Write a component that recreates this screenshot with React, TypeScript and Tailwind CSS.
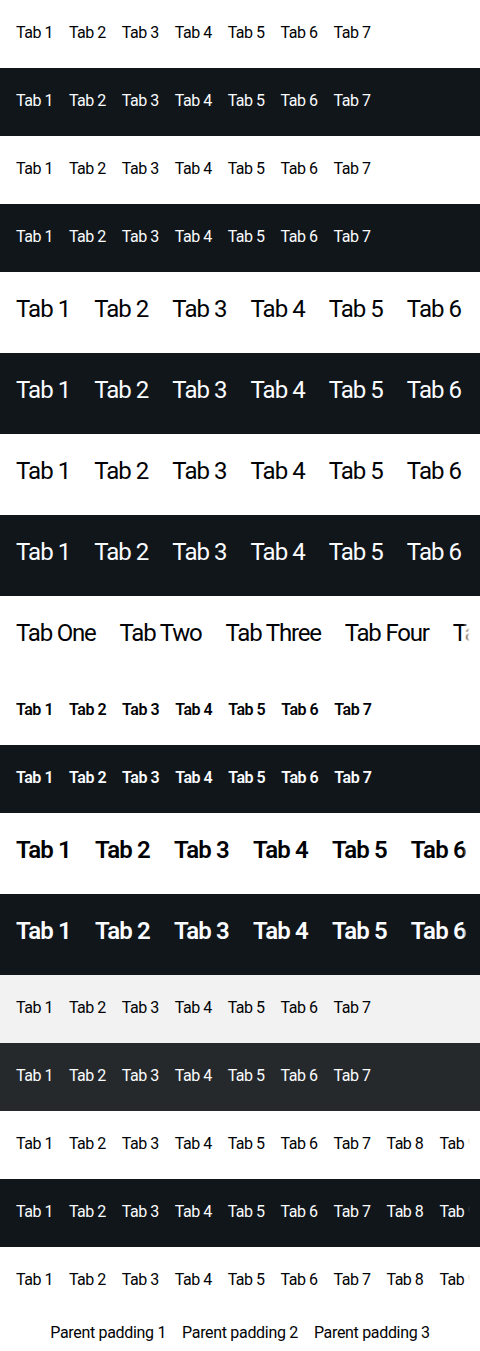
import React from "react";

type Row = {
  theme: "light" | "dark" | "surface-light" | "surface-dark";
  size: "small" | "large";
  bold?: boolean;
  tabs: string[];
};

const nums = (n: number) => Array.from({ length: n }, (_, i) => `Tab ${i + 1}`);

const rows: Row[] = [
  { theme: "light", size: "small", tabs: nums(7) },
  { theme: "dark", size: "small", tabs: nums(7) },
  { theme: "light", size: "small", tabs: nums(7) },
  { theme: "dark", size: "small", tabs: nums(7) },
  { theme: "light", size: "large", tabs: nums(7) },
  { theme: "dark", size: "large", tabs: nums(7) },
  { theme: "light", size: "large", tabs: nums(7) },
  { theme: "dark", size: "large", tabs: nums(7) },
  { theme: "light", size: "large", tabs: ["Tab One", "Tab Two", "Tab Three", "Tab Four", "Tab Five"] },
  { theme: "light", size: "small", bold: true, tabs: nums(7) },
  { theme: "dark", size: "small", bold: true, tabs: nums(7) },
  { theme: "light", size: "large", bold: true, tabs: nums(7) },
  { theme: "dark", size: "large", bold: true, tabs: nums(7) },
  { theme: "surface-light", size: "small", tabs: nums(7) },
  { theme: "surface-dark", size: "small", tabs: nums(7) },
  { theme: "light", size: "small", tabs: nums(9) },
  { theme: "dark", size: "small", tabs: nums(9) },
  { theme: "light", size: "small", tabs: nums(9) },
];

const themeClass = {
  light: "bg-white text-[#010205]",
  dark: "bg-[#10161a] text-[#fbfcff]",
  "surface-light": "bg-[#f2f2f2] text-[#010205]",
  "surface-dark": "bg-[#25292c] text-[#fbfcff]",
};

// scroll fade at the right edge of the bar
const fadeClass = {
  light: "from-white/0 to-white",
  dark: "from-[#10161a]/0 to-[#10161a]",
  "surface-light": "from-[#f2f2f2]/0 to-[#f2f2f2]",
  "surface-dark": "from-[#25292c]/0 to-[#25292c]",
};

function TabsBar({ row }: { row: Row }) {
  const large = row.size === "large";
  let tracking = large ? "tracking-[-0.04em]" : "tracking-[-0.03em]";
  if (large && row.bold) tracking = "tracking-[-0.035em]";
  if (row.tabs[0] === "Tab One") tracking = "tracking-[-0.05em]";
  return (
    <div
      className={`relative overflow-hidden px-4 flex items-center ${themeClass[row.theme]} ${
        large ? "h-[81px] pb-[8px] text-[24px] gap-6" : "h-[68px] pb-[2px] text-[16px] gap-4"
      } ${tracking} ${row.bold ? "font-semibold" : "font-normal"}`}
    >
      {row.tabs.map((t) => (
        <span key={t} className="shrink-0 whitespace-nowrap leading-normal">
          {t}
        </span>
      ))}
      <div className={`absolute right-0 top-0 h-full w-[17px] bg-gradient-to-r to-40% ${fadeClass[row.theme]}`} />
    </div>
  );
}

export default function App() {
  return (
    <div className="w-[480px] bg-white font-['Roboto','Liberation_Sans',sans-serif]">
      {rows.map((r, i) => (
        <TabsBar key={i} row={r} />
      ))}
      <div className="h-[36px] flex items-center justify-center gap-4 text-[16px] text-[#010205] tracking-[-0.02em]">
        <span>Parent padding 1</span>
        <span>Parent padding 2</span>
        <span>Parent padding 3</span>
      </div>
    </div>
  );
}
